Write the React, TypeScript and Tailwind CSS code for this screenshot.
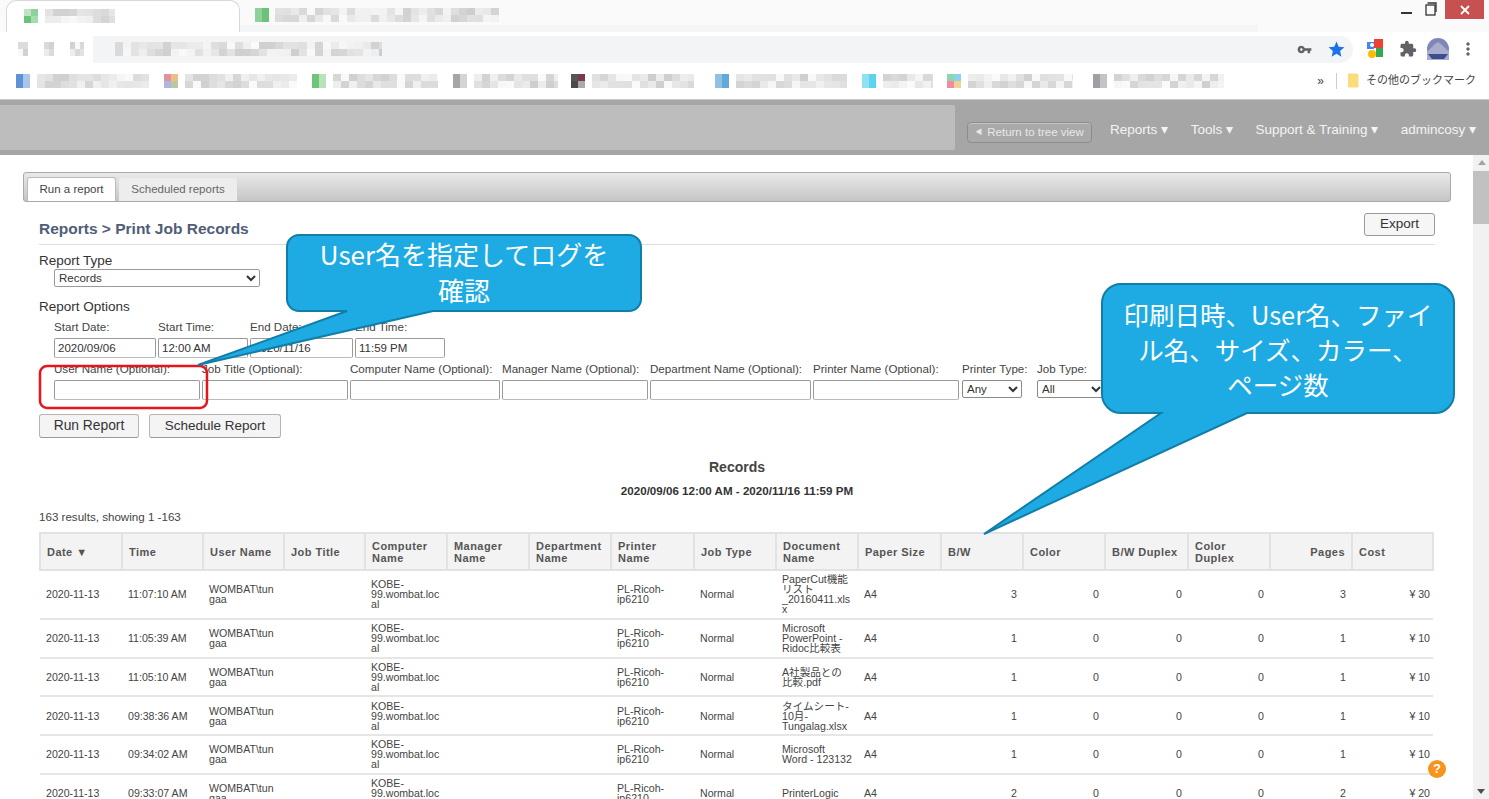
import { MdExtension, MdMoreVert, MdStar, MdVpnKey } from 'react-icons/md'

/* ── blurred-out browser chrome ─────────────────────── */
function shade(seed: number, i: number) {
  const n = Math.abs(Math.sin(seed * 12.9 + i * 78.2) * 43758.5) % 1
  const v = Math.round(205 + n * 45)
  return `rgb(${v},${v},${v})`
}

function Smear({ width, seed, cell = 8 }: { width: number; seed: number; cell?: number }) {
  const cols = Math.ceil(width / cell)
  return (
    <div className="flex flex-col blur-[0.7px]" style={{ width }}>
      {[0, 1].map(r => (
        <div key={r} className="flex h-[7px] overflow-hidden">
          {Array.from({ length: cols }).map((_, i) => (
            <div key={i} className="shrink-0 h-full" style={{ width: cell, backgroundColor: shade(seed + r, i) }} />
          ))}
        </div>
      ))}
    </div>
  )
}

type Bookmark = { ml: number; icon: string[]; w: number }

const BOOKMARKS: Bookmark[] = [
  { ml: 16, icon: ['#5d93d6', '#a9c6ea'], w: 112 },
  { ml: 15, icon: ['#e0949a', '#efbd8c', '#b0b6e2', '#bcc9a0'], w: 112 },
  { ml: 15, icon: ['#6dc579', '#b7e2bc'], w: 105 },
  { ml: 15, icon: ['#a6a6a8', '#d4d4d6'], w: 84 },
  { ml: 13, icon: ['#55555a', '#7a3a4a', '#4a4a4e', '#aaaaaa'], w: 102 },
  { ml: 21, icon: ['#8fc1e3', '#63a9d8'], w: 111 },
  { ml: 15, icon: ['#8ee0f2', '#5cd4ee'], w: 50 },
  { ml: 14, icon: ['#8ed6b0', '#8ed0ee', '#ee8ca2', '#f2d28e'], w: 105 },
  { ml: 20, icon: ['#a0a0a4', '#c4c4c8'], w: 110 },
]

function Favicon({ colors }: { colors: string[] }) {
  return (
    <div className="grid grid-cols-2 w-[14px] h-[14px] shrink-0 blur-[0.4px]">
      {[0, 1, 2, 3].map(i => (
        <div key={i} style={{ backgroundColor: colors[i % colors.length] }} />
      ))}
    </div>
  )
}

function BrowserChrome() {
  return (
    <div className="h-[99px] bg-white">
      {/* tab strip */}
      <div className="flex h-[32px] bg-[#fafafa]">
        <div className="flex items-center shrink-0 w-[234px] ml-[6px] h-[32px] bg-white border border-b-0 border-[#d8d8d8] rounded-t-[10px] pl-[17px] pb-[2px] gap-[7px]">
          <Favicon colors={['#bfe3c3', '#8fd19a', '#6cc27a', '#a5dcae']} />
          <Smear width={70} seed={3} />
        </div>
        <div className="flex flex-col w-[1018px] shrink-0">
          <div className="flex items-center h-[25px] pt-[5px] pl-[15px] gap-[6px]">
            <Favicon colors={['#8fd19a', '#6cc27a']} />
            <Smear width={224} seed={7} />
          </div>
          <div className="h-[7px] bg-[#f4f5f6]" />
        </div>
        <div className="flex-1" />
        <div className="flex h-[20px]">
          <div className="w-[38px] flex items-center justify-center">
            <div className="w-[11px] h-[2px] bg-[#333] mt-[6px]" />
          </div>
          <svg className="w-[12px] h-[14px] mt-[2px] mr-[8px]" viewBox="0 0 12 14" fill="none" stroke="#333" strokeWidth="1.3">
            <rect x="1" y="3" width="9" height="10" />
            <path d="M2.5 1H11V10" />
          </svg>
          <div className="flex items-center justify-center w-[39px] h-[19px] bg-[#c75050] mr-[5px]">
            <svg className="w-[10px] h-[10px]" viewBox="0 0 10 10" stroke="#fff" strokeWidth="1.8">
              <path d="M1 1L9 9M9 1L1 9" />
            </svg>
          </div>
        </div>
      </div>

      {/* toolbar */}
      <div className="flex items-center h-[34px] pl-[18px]">
        <Smear width={10} seed={11} cell={5} />
        <div className="ml-[16px]"><Smear width={10} seed={13} cell={5} /></div>
        <div className="ml-[16px]"><Smear width={14} seed={17} cell={5} /></div>
        <div className="flex items-center shrink-0 w-[1260px] h-[27px] ml-[9px] pl-[22px] bg-[#f3f4f5] rounded-r-full">
          <Smear width={267} seed={19} />
          <div className="flex-1" />
          <MdVpnKey className="w-[15px] h-[15px] text-[#5f6368] mr-[15px]" />
          <MdStar className="w-[19px] h-[19px] text-[#1a73e8] mr-[7px]" />
        </div>
        <svg className="w-[16px] h-[20px] ml-[14px] shrink-0" viewBox="0 0 16 20">
          <rect x="0" y="3" width="7" height="7" fill="#4285f4" />
          <rect x="7" y="0" width="9" height="9" fill="#ea4335" />
          <rect x="9" y="9" width="7" height="9" fill="#34a853" />
          <circle cx="5" cy="15" r="4" fill="#fbbc05" />
          <circle cx="5" cy="6" r="2" fill="#fff" />
        </svg>
        <MdExtension className="w-[18px] h-[18px] text-[#5f6368] ml-[16px] shrink-0" />
        <svg className="w-[22px] h-[22px] ml-[10px] shrink-0" viewBox="0 0 22 22">
          <circle cx="11" cy="11" r="11" fill="#7f86b8" />
          <path d="M0 14L8 6L11 4L15 7L22 14V22H0Z" fill="#a9aece" />
          <path d="M1 16H21L17 21H5Z" fill="#3f4c8e" />
        </svg>
        <MdMoreVert className="w-[20px] h-[20px] text-[#5f6368] ml-[9px] shrink-0" />
      </div>

      {/* bookmarks bar */}
      <div className="flex items-center h-[29px]">
        {BOOKMARKS.map((b, i) => (
          <div key={i} className="flex items-center gap-[7px] shrink-0" style={{ marginLeft: b.ml }}>
            <Favicon colors={b.icon} />
            <Smear width={b.w} seed={23 + i} />
          </div>
        ))}
        <div className="flex-1" />
        <span className="text-[12px] text-[#444] mr-[12px]">»</span>
        <div className="w-px h-[16px] bg-[#ccc] mr-[10px]" />
        <svg className="w-[12px] h-[15px] mr-[7px] shrink-0" viewBox="0 0 12 15">
          <path d="M1 1.500A1 1 0 0 1 2 .5H10A1.500 1.500 0 0 1 11.500 2V13A1.500 1.500 0 0 1 10 14.500H2A1 1 0 0 1 1 13.500Z" fill="#fbdc7c" />
        </svg>
        <span className="text-[11px] text-[#444] mr-[13px] whitespace-nowrap">その他のブックマーク</span>
      </div>
    </div>
  )
}

/* ── app header ─────────────────────────────────────── */
const NAV = ['Reports', 'Tools', 'Support & Training', 'admincosy']

function AppHeader() {
  return (
    <div className="flex items-center h-[56px] bg-[#a6a6a6] border-t border-[#c9c9c9]">
      <div className="w-[955px] h-[45px] bg-[#bdbdbd] rounded-r-[2px]" />
      <div className="flex items-center justify-center gap-[5px] w-[125px] h-[21px] ml-[12px] mt-[10px] border border-[#8c8c8c] rounded-[4px] bg-[#a9a9a9] shadow-[inset_0_1px_0_#c6c6c6] text-[11.500px] text-[#e8e8e8] whitespace-nowrap">
        <span className="text-[7px]">◀</span>
        Return to tree view
      </div>
      <div className="flex items-center gap-[22.400px] ml-[18px] mt-[5px] text-[13.500px] text-[#f4f4f4] whitespace-nowrap">
        {NAV.map(n => (
          <span key={n}>{n}<span className="ml-[4px] text-[14px]">▾</span></span>
        ))}
      </div>
    </div>
  )
}

/* ── report form ────────────────────────────────────── */
const inputCls = 'block h-[20px] px-[3px] border border-[#9a9a9a] border-b-[#bbb] rounded-[2px] bg-white text-[11.500px] text-[#333]'

function Field({ label, w, value, gap = 2 }: { label: string; w: number; value?: string; gap?: number }) {
  return (
    <div className="shrink-0" style={{ width: w, marginRight: gap }}>
      <div className="h-[12px] leading-[12px] mb-[5px] text-[11.600px] text-[#444] whitespace-nowrap">{label}</div>
      <input readOnly defaultValue={value} className={inputCls} style={{ width: w }} />
    </div>
  )
}

function SelectField({ label, w, value, gap = 2 }: { label: string; w: number; value: string; gap?: number }) {
  return (
    <div className="shrink-0" style={{ width: w, marginRight: gap }}>
      <div className="h-[12px] leading-[12px] mb-[5px] text-[11.600px] text-[#444] whitespace-nowrap">{label}</div>
      <select defaultValue={value} className="block h-[18px] border border-[#8a8a8a] rounded-[2px] bg-white text-[11.500px] text-[#333]" style={{ width: w }}>
        <option>{value}</option>
      </select>
    </div>
  )
}

function ReportForm() {
  return (
    <>
      <div className="flex items-center justify-between h-[43px] border-b border-[#ddd]">
        <h1 className="text-[15.500px] font-bold text-[#4f5d78] mt-[11px]">Reports &gt; Print Job Records</h1>
        <button className="w-[71px] h-[23px] mt-[2px] border border-[#999] rounded-[3px] bg-[#f6f6f6] text-[13.500px] text-[#333]">Export</button>
      </div>

      <div className="h-[16px] leading-[16px] mt-[8px] text-[13.500px] text-[#333]">Report Type</div>
      <select defaultValue="Records" className="block w-[206px] h-[18px] ml-[15px] border border-[#9a9a9a] rounded-[2px] bg-white text-[11.500px] text-[#333]">
        <option>Records</option>
      </select>

      <div className="h-[16px] leading-[16px] mt-[12px] text-[13.500px] text-[#333]">Report Options</div>

      <div className="flex ml-[15px] mt-[6px]">
        <Field label="Start Date:" w={102} value="2020/09/06" />
        <Field label="Start Time:" w={90} value="12:00 AM" />
        <Field label="End Date:" w={103} value="2020/11/16" />
        <Field label="End Time:" w={90} value="11:59 PM" />
      </div>

      <div className="flex ml-[15px] mt-[5px]">
        <Field label="User Name (Optional):" w={146} />
        <Field label="Job Title (Optional):" w={146} />
        <Field label="Computer Name (Optional):" w={150} />
        <Field label="Manager Name (Optional):" w={146} />
        <Field label="Department Name (Optional):" w={161} />
        <Field label="Printer Name (Optional):" w={146} gap={3} />
        <SelectField label="Printer Type:" w={60} value="Any" gap={15} />
        <SelectField label="Job Type:" w={68} value="All" />
      </div>

      <div className="flex gap-[10px] mt-[14px]">
        <button className="w-[100px] h-[24px] border border-[#b5b5b5] border-b-[#999] rounded-[3px] bg-[#f4f4f4] text-[13.800px] text-[#333]">Run Report</button>
        <button className="w-[132px] h-[24px] border border-[#b5b5b5] border-b-[#999] rounded-[3px] bg-[#f4f4f4] text-[13.500px] text-[#333]">Schedule Report</button>
      </div>

      <div className="mt-[20px] text-center text-[14px] leading-[18px] font-bold text-[#444]">Records</div>
      <div className="mt-[8px] text-center text-[11.600px] leading-[13px] font-bold text-[#333]">2020/09/06 12:00 AM - 2020/11/16 11:59 PM</div>
      <div className="mt-[13px] text-[11.600px] leading-[14px] text-[#444]">163 results, showing 1 -163</div>
    </>
  )
}

/* ── records table ──────────────────────────────────── */
type Job = { time: string; doc: string; bw: number; cost: string }

const JOBS: Job[] = [
  { time: '11:07:10 AM', doc: 'PaperCut機能\nリスト\n_20160411.xls\nx', bw: 3, cost: '¥ 30' },
  { time: '11:05:39 AM', doc: 'Microsoft\nPowerPoint -\nRidoc比較表', bw: 1, cost: '¥ 10' },
  { time: '11:05:10 AM', doc: 'A社製品との\n比較.pdf', bw: 1, cost: '¥ 10' },
  { time: '09:38:36 AM', doc: 'タイムシート-\n10月-\nTungalag.xlsx', bw: 1, cost: '¥ 10' },
  { time: '09:34:02 AM', doc: 'Microsoft\nWord - 123132', bw: 1, cost: '¥ 10' },
  { time: '09:33:07 AM', doc: 'PrinterLogic', bw: 2, cost: '¥ 20' },
]

const HEADERS = [
  'Date ▼', 'Time', 'User Name', 'Job Title', 'Computer Name', 'Manager Name', 'Department Name', 'Printer Name',
  'Job Type', 'Document Name', 'Paper Size', 'B/W', 'Color', 'B/W Duplex', 'Color Duplex', 'Pages', 'Cost',
]

const COL_WIDTHS = [82, 81, 81, 81, 82, 82, 82, 83, 82, 82, 83, 82, 82, 83, 82, 82, 81]

const td = 'pl-[6px] pr-[5.500px] py-[3.375px] text-[10.600px] leading-[10px] text-[#444] align-middle break-words'
const tdNum = 'pl-[5px] pr-[6px] py-[3.375px] text-[10.600px] leading-[10px] text-[#444] text-right align-middle'

function RecordsTable() {
  return (
    <table className="table-fixed border-collapse w-[1393px] mt-[8px]">
      <colgroup>
        {COL_WIDTHS.map((w, i) => (
          <col key={i} style={{ width: w }} />
        ))}
      </colgroup>
      <thead>
        <tr className="h-[37px] bg-[#f3f3f3]">
          {HEADERS.map(h => (
            <th
              key={h}
              className={`px-[6px] border-2 border-[#e2e2e2] text-[11px] leading-[12px] font-bold tracking-[0.45px] text-[#555] ${h === 'Pages' ? 'text-right' : 'text-left'}`}
            >
              {h}
            </th>
          ))}
        </tr>
      </thead>
      <tbody>
        {JOBS.map(j => (
          <tr key={j.time} className="border-b-2 border-[#e6e6e6]">
            <td className={td}>2020-11-13</td>
            <td className={td}>{j.time}</td>
            <td className={td}>WOMBAT\tungaa</td>
            <td className={td} />
            <td className={td}>KOBE-99.wombat.local</td>
            <td className={td} />
            <td className={td} />
            <td className={td}>PL-Ricoh-ip6210</td>
            <td className={td}>Normal</td>
            <td className={`${td} whitespace-pre-line`}>{j.doc}</td>
            <td className={td}>A4</td>
            <td className={tdNum}>{j.bw}</td>
            <td className={tdNum}>0</td>
            <td className={tdNum}>0</td>
            <td className={tdNum}>0</td>
            <td className={tdNum}>{j.bw}</td>
            <td className="pr-[3px] text-[10.600px] leading-[10px] text-[#444] text-right align-middle whitespace-nowrap">{j.cost}</td>
          </tr>
        ))}
      </tbody>
    </table>
  )
}

/* ── annotations laid over the page ─────────────────── */
function Annotations() {
  return (
    <>
      <svg className="absolute inset-0 w-[1489px] h-[799px] pointer-events-none" viewBox="0 0 1489 799">
        <rect x="40" y="366" width="167" height="42" rx="7" fill="none" stroke="#e8141c" strokeWidth="2.500" />
        <path
          d="M299 235H629A12 12 0 0 1 641 247V299A12 12 0 0 1 629 311H433L198 365L347 311H299A12 12 0 0 1 287 299V247A12 12 0 0 1 299 235Z"
          fill="#1eabe3" stroke="#117ea8" strokeWidth="2"
        />
        <path
          d="M1121 284H1435A19 19 0 0 1 1454 303V394A19 19 0 0 1 1435 413H1247L984 534L1161 413H1121A19 19 0 0 1 1102 394V303A19 19 0 0 1 1121 284Z"
          fill="#1eabe3" stroke="#117ea8" strokeWidth="2"
        />
      </svg>
      <div className="absolute left-[287px] top-[236px] w-[354px] text-center text-[26px] leading-[36px] text-white font-['Noto_Sans_CJK_JP',sans-serif]">
        User名を指定してログを<br />確認
      </div>
      <div className="absolute left-[1102px] top-[296px] w-[352px] text-center text-[25.500px] leading-[35px] text-white font-['Noto_Sans_CJK_JP',sans-serif] whitespace-nowrap">
        印刷日時、User名、ファイ<br />ル名、サイズ、カラー、<br />ページ数
      </div>
      <div className="absolute left-[1428px] top-[760px] flex items-center justify-center w-[18px] h-[18px] rounded-full bg-[#f7931e] text-[13px] font-bold text-white">?</div>
    </>
  )
}

export default function App() {
  return (
    <div className="relative w-[1489px] h-[799px] overflow-hidden bg-white font-['Liberation_Sans','Noto_Sans_CJK_JP',sans-serif]">
      <BrowserChrome />
      <AppHeader />

      <div className="flex h-[644px] overflow-hidden">
        <main className="w-[1473px] shrink-0">
          {/* tabs */}
          <div className="flex items-end h-[30px] mt-[17px] ml-[23px] mr-[22px] pl-[3px] gap-[3px] border border-[#aaa] rounded-[3px] bg-gradient-to-b from-[#e9e9e9] to-[#c6c6c6]">
            <div className="flex items-center justify-center w-[89px] h-[24px] bg-white border border-b-0 border-[#bbb] rounded-t-[3px] text-[11.500px] text-[#444]">Run a report</div>
            <div className="flex items-center justify-center w-[118px] h-[23px] bg-[#ededed] rounded-t-[3px] text-[11.500px] text-[#666]">Scheduled reports</div>
          </div>

          <div className="ml-[39px] mr-[38px]">
            <ReportForm />
            <RecordsTable />
          </div>
        </main>

        {/* scrollbar */}
        <div className="relative flex-1 bg-[#f1f1f1]">
          <div className="absolute left-[5px] top-[5px] w-0 h-0 border-x-[4px] border-x-transparent border-b-[5px] border-b-[#a3a3a3]" />
          <div className="mt-[16px] h-[53px] bg-[#c1c1c1]" />
          <div className="absolute left-[4px] bottom-[5px] w-0 h-0 border-x-[4px] border-x-transparent border-t-[5px] border-t-[#505050]" />
        </div>
      </div>

      <Annotations />
    </div>
  )
}
